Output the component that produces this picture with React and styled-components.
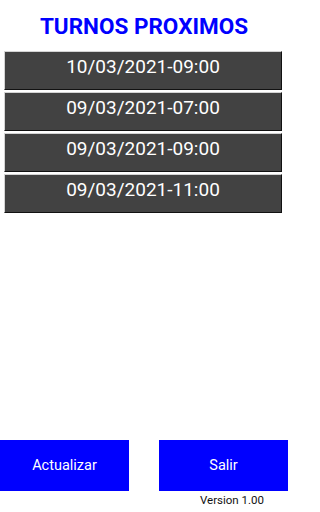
import styled, { createGlobalStyle } from 'styled-components';

const GlobalStyle = createGlobalStyle`
  html, body {
    margin: 0;
    padding: 0;
    background: #ffffff;
  }
  * {
    box-sizing: border-box;
  }
`;

const Screen = styled.div`
  width: 288px;
  height: 512px;
  display: flex;
  flex-direction: column;
  font-family: Roboto, "Liberation Sans", sans-serif;
  background: #ffffff;
  overflow: hidden;
`;

const Title = styled.h1`
  margin: 0;
  padding-top: 13px;
  height: 51px;
  font-size: 22.5px;
  line-height: 26px;
  font-weight: 700;
  color: #0000ff;
  text-align: center;
`;

const List = styled.div`
  display: flex;
  flex-direction: column;
  gap: 2px;
  padding: 0 6px 0 4px;
`;

const Row = styled.div`
  height: 39px;
  background: #424242;
  border-top: 1px solid #d4d4d4;
  border-left: 1px solid #d4d4d4;
  border-right: 1px solid #111111;
  border-bottom: 1px solid #111111;
  padding-top: 3px;
  color: #ffffff;
  font-size: 19px;
  text-align: center;
`;

const Footer = styled.div`
  margin-top: auto;
  padding-bottom: 5px;
`;

const ButtonBar = styled.div`
  display: flex;
  justify-content: space-between;
`;

const Button = styled.button`
  width: 129px;
  height: 51px;
  border: none;
  border-radius: 0;
  background: #0000ff;
  color: #ffffff;
  font-family: Roboto, "Liberation Sans", sans-serif;
  font-size: 14.5px;
  padding: 0;
`;

const Version = styled.div`
  text-align: right;
  padding-right: 24px;
  margin-top: 2px;
  font-size: 11.5px;
  line-height: 14px;
  color: #111111;
`;

const turnos = [
  '10/03/2021-09:00',
  '09/03/2021-07:00',
  '09/03/2021-09:00',
  '09/03/2021-11:00',
];

export default function App() {
  return (
    <>
      <GlobalStyle />
      <Screen>
        <Title>TURNOS PROXIMOS</Title>
        <List>
          {turnos.map((t, i) => (
            <Row key={i}>{t}</Row>
          ))}
        </List>
        <Footer>
          <ButtonBar>
            <Button>Actualizar</Button>
            <Button>Salir</Button>
          </ButtonBar>
          <Version>Version 1.00</Version>
        </Footer>
      </Screen>
    </>
  );
}
